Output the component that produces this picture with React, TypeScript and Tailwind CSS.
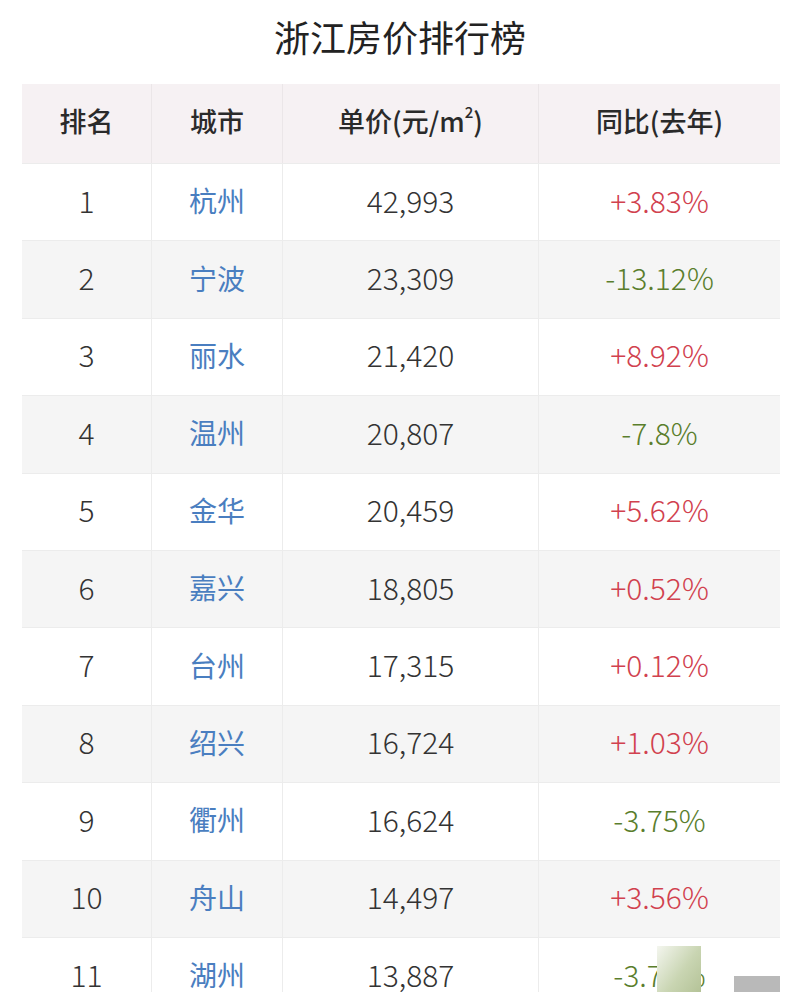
import React from "react";

const rows: [string, string, string, string][] = [
  ["1", "杭州", "42,993", "+3.83%"],
  ["2", "宁波", "23,309", "-13.12%"],
  ["3", "丽水", "21,420", "+8.92%"],
  ["4", "温州", "20,807", "-7.8%"],
  ["5", "金华", "20,459", "+5.62%"],
  ["6", "嘉兴", "18,805", "+0.52%"],
  ["7", "台州", "17,315", "+0.12%"],
  ["8", "绍兴", "16,724", "+1.03%"],
  ["9", "衢州", "16,624", "-3.75%"],
  ["10", "舟山", "14,497", "+3.56%"],
  ["11", "湖州", "13,887", "-3.74%"],
];

const font = { fontFamily: '"Noto Sans CJK SC", "Noto Sans", sans-serif' };

export default function App() {
  return (
    <div className="w-[800px] h-[992px] bg-white overflow-hidden relative" style={font}>
      <div className="h-[84px] flex items-center justify-center pb-[12px]">
        <h1 className="text-[36px] text-[#222] font-normal">浙江房价排行榜</h1>
      </div>
      <div className="ml-[22px] w-[758px]">
        <div className="grid grid-cols-[130px_131px_256px_241px] h-[79px] bg-[#f6f1f3] text-[27px] font-medium text-[#2a2a2a]">
          <div className="flex items-center justify-center pb-[4px] border-r border-[#ebe6e8]">排名</div>
          <div className="flex items-center justify-center pb-[4px] border-r border-[#ebe6e8]">城市</div>
          <div className="flex items-center justify-center pb-[4px] border-r border-[#ebe6e8]">
            单价(元/m<sup className="text-[15px] -top-[10px]">2</sup>)
          </div>
          <div className="flex items-center justify-center pb-[4px]">同比(去年)</div>
        </div>
        {rows.map(([rank, city, price, pct], i) => {
          const up = pct.startsWith("+");
          return (
            <div
              key={rank}
              className={`grid grid-cols-[130px_131px_256px_241px] h-[77.4px] border-t border-[#ececec] ${
                i % 2 === 1 ? "bg-[#f5f5f5]" : "bg-white"
              }`}
            >
              <div className="flex items-center justify-center pb-[4px] border-r border-[#ececec] text-[30px] font-light text-[#333]">
                {rank}
              </div>
              <div className="flex items-center justify-center pb-[4px] border-r border-[#ececec] text-[28px] text-[#4a7ec0]">
                {city}
              </div>
              <div className="flex items-center justify-center pb-[4px] border-r border-[#ececec] text-[30px] font-light text-[#333]">
                {price}
              </div>
              <div
                className={`relative flex items-center justify-center pb-[4px] text-[30px] font-light ${
                  up ? "text-[#d1414e]" : "text-[#5a7e2c]"
                }`}
              >
                {pct}
                {i === 10 && (
                  <div className="absolute left-[118px] top-[8px] w-[44px] h-[60px] bg-gradient-to-br from-[#f4f6ef] via-[#c9d5b2] to-[#aebd8f]" />
                )}
              </div>
            </div>
          );
        })}
      </div>
      <div className="absolute right-[20px] bottom-0 w-[46px] h-[16px] bg-[#8a8a8a] opacity-60" />
    </div>
  );
}
